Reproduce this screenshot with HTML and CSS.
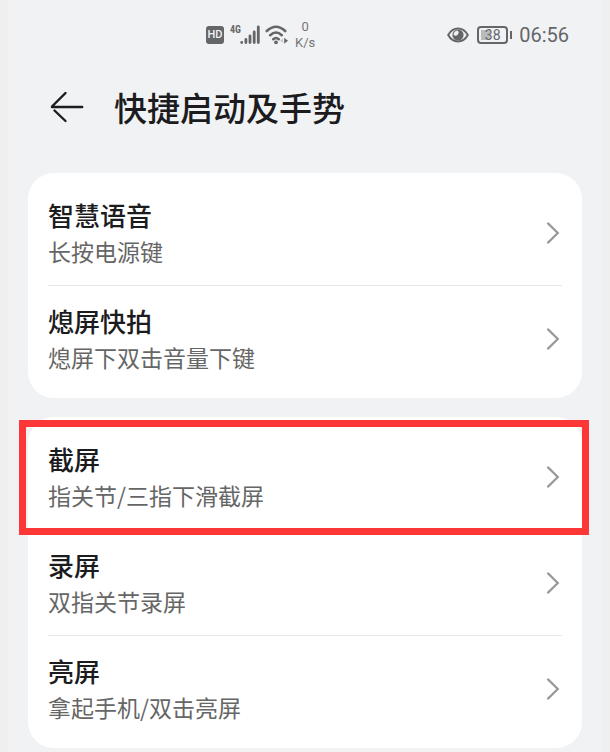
FILE: index.html
```html
<!DOCTYPE html>
<html lang="zh-CN">
<head>
  <meta charset="UTF-8">
  <meta name="viewport" content="width=device-width, initial-scale=1.0">
  <title>快捷启动及手势</title>
  <link rel="stylesheet" href="styles.css">
</head>
<body>
  <div class="screen">
    <div class="status">
      <div class="status-left">
        <span class="hd">HD</span>
        <div class="signal">
          <span class="net">4G</span>
          <svg width="20" height="20" viewBox="0 0 20 20" stroke="#646668" stroke-width="2.8" stroke-linecap="round">
            <path d="M1.7 17.3v.2M5.9 14.4v3.1M10 11v6.5M14.2 7v10.5M18.3 2v15.5"/>
          </svg>
        </div>
        <svg class="wifi" width="24" height="22" viewBox="0 0 24 22" fill="none" stroke="#646668" stroke-width="2.6" stroke-linecap="round">
          <path d="M1.8 7Q11 -1.5 20.2 7M5.2 11.2Q11 5.8 16.8 11.2M8.3 15.2Q11 12.8 13.7 15.2"/>
          <circle cx="11" cy="18.3" r="1.9" fill="#646668" stroke="none"/>
          <path d="M19.2 13.7l3.8 3-3.8 3z" fill="#646668" stroke="none"/>
          <path d="M18 14.4l-2.6 2.3 2.6 2.3z" fill="#c4c6c8" stroke="none"/>
        </svg>
        <div class="speed"><span>0</span><span>K/s</span></div>
      </div>
      <div class="status-right">
        <svg width="22" height="18" viewBox="0 0 22 18">
          <path d="M1.2 9C6 .4 16 .4 20.8 9 16 17.6 6 17.6 1.2 9z" fill="none" stroke="#646668" stroke-width="2"/>
          <circle cx="11" cy="9" r="5.6" fill="#646668"/>
          <path d="M10.6 4.6a2.9 2.9 0 0 1-4.1 4.2 4.8 4.8 0 0 1 4.1-4.2z" fill="#f1f2f4"/>
        </svg>
        <div class="battery"><span class="level" style="width:38%"></span><span class="percent">38</span></div>
        <span class="time">06:56</span>
      </div>
    </div>

    <header>
      <button type="button" class="back" aria-label="返回">
        <svg width="34" height="32" viewBox="0 0 34 32" fill="none" stroke="#1c1c1e" stroke-width="2.4" stroke-linecap="round" stroke-linejoin="round">
          <path d="M32.2 16H2M15.5 2L2 15.5M4.5 19.5L15.5 30"/>
        </svg>
      </button>
      <h1>快捷启动及手势</h1>
    </header>

    <main>
      <ul class="card">
        <li>
          <a href="#voice">
            <div class="text"><h2>智慧语音</h2><p>长按电源键</p></div>
            <svg class="arrow" viewBox="0 0 14 24"><path d="M2 2.4L11.8 12 2 21.6"/></svg>
          </a>
        </li>
        <li>
          <a href="#snapshot">
            <div class="text"><h2>熄屏快拍</h2><p>熄屏下双击音量下键</p></div>
            <svg class="arrow" viewBox="0 0 14 24"><path d="M2 2.4L11.8 12 2 21.6"/></svg>
          </a>
        </li>
      </ul>

      <ul class="card">
        <li class="marked">
          <a href="#screenshot">
            <div class="text"><h2>截屏</h2><p>指关节/三指下滑截屏</p></div>
            <svg class="arrow" viewBox="0 0 14 24"><path d="M2 2.4L11.8 12 2 21.6"/></svg>
          </a>
        </li>
        <li>
          <a href="#record">
            <div class="text"><h2>录屏</h2><p>双指关节录屏</p></div>
            <svg class="arrow" viewBox="0 0 14 24"><path d="M2 2.4L11.8 12 2 21.6"/></svg>
          </a>
        </li>
        <li>
          <a href="#wake">
            <div class="text"><h2>亮屏</h2><p>拿起手机/双击亮屏</p></div>
            <svg class="arrow" viewBox="0 0 14 24"><path d="M2 2.4L11.8 12 2 21.6"/></svg>
          </a>
        </li>
      </ul>
    </main>
  </div>
</body>
</html>
```

FILE: styles.css
```css
* {
  box-sizing: border-box;
}

body {
  margin: 0;
  padding: 0 8px;
  background-color: #efefef;
  font-family: "Noto Sans CJK SC", sans-serif;
  color: #1c1c1e;
}

.screen {
  min-height: 100vh;
  padding-bottom: 4px;
  background-color: #f1f2f4;
}

h1, h2, p, ul {
  margin: 0;
  padding: 0;
}

/* status bar */
.status {
  display: flex;
  justify-content: space-between;
  align-items: center;
  height: 70px;
  padding: 0 33px 0 198px;
  font-family: Roboto, sans-serif;
  color: #646668;
}

.status-left,
.status-right {
  display: flex;
  align-items: center;
}

.hd {
  width: 18px;
  height: 18px;
  margin-right: 6px;
  border-radius: 3px;
  background-color: #646668;
  color: #f1f2f4;
  font-size: 11px;
  font-weight: 500;
  line-height: 18px;
  text-align: center;
}

.signal {
  display: flex;
  align-items: flex-start;
}

.net {
  width: 10px;
  font-family: "Liberation Sans Narrow", "Roboto Condensed", Roboto, sans-serif;
  font-size: 10px;
  font-weight: bold;
  line-height: 10px;
}

.wifi {
  margin: 0 6px 0 5px;
}

.speed {
  display: flex;
  flex-direction: column;
  align-items: center;
  color: #747678;
  font-size: 13px;
  line-height: 16px;
}

.battery {
  position: relative;
  width: 31px;
  height: 18px;
  margin: 0 11px 0 8px;
  padding: 2px;
  border: 2px solid #646668;
  border-radius: 4px;
}

.battery::after {
  content: "";
  position: absolute;
  top: 3px;
  right: -6px;
  width: 2px;
  height: 8px;
  background-color: #646668;
}

.level {
  display: block;
  height: 10px;
  background-color: #b8babc;
}

.percent {
  position: absolute;
  inset: 0;
  font-size: 14px;
  line-height: 14px;
  text-align: center;
}

.time {
  font-size: 20px;
  line-height: 24px;
}

/* title bar */
header {
  display: flex;
  align-items: center;
  height: 73px;
  padding-left: 42px;
}

.back {
  display: flex;
  margin-right: 30px;
  padding: 0;
  border: 0;
  background: none;
  cursor: pointer;
}

h1 {
  font-size: 33px;
  font-weight: 500;
  line-height: 48px;
}

/* settings list */
main {
  padding: 30px 20px 0;
}

.card {
  margin-bottom: 19px;
  padding: 7px 20px 6px;
  border-radius: 26px;
  background-color: #fff;
  list-style: none;
}

.card:last-child {
  margin-bottom: 0;
}

.card li {
  position: relative;
  border-bottom: 1px solid #e8e8e9;
}

.card li:last-child,
.card .marked {
  border-color: transparent;
}

.card a {
  display: flex;
  justify-content: space-between;
  align-items: center;
  height: 105px;
  color: inherit;
  text-decoration: none;
}

.text {
  padding-top: 1px;
}

h2 {
  font-size: 26px;
  font-weight: 500;
  line-height: 37px;
}

p {
  color: #666;
  font-size: 23px;
  line-height: 37px;
}

.arrow {
  width: 14px;
  height: 24px;
  margin-right: 2px;
  fill: none;
  stroke: #999;
  stroke-width: 2.2;
  stroke-linecap: round;
}

/* red frame around the highlighted row */
.marked::after {
  content: "";
  position: absolute;
  inset: -4px -27px -6px -29px;
  z-index: 1;
  border: 7px solid #fd3737;
  pointer-events: none;
}
```
